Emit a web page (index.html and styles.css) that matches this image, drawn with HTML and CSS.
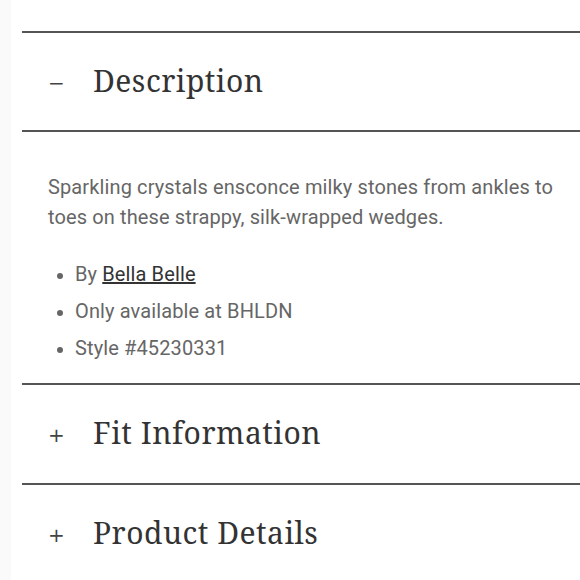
FILE: index.html
```html
<!DOCTYPE html>
<html>
<head>
<meta charset="utf-8">
<link rel="stylesheet" href="styles.css">
</head>
<body>
<div class="page">
  <div class="accordion">
    <section class="item open">
      <div class="head"><span class="sign">&minus;</span><h2>Description</h2></div>
      <div class="body">
        <p>Sparkling crystals ensconce milky stones from ankles to toes on these strappy, silk-wrapped wedges.</p>
        <ul>
          <li>By <a href="#">Bella Belle</a></li>
          <li>Only available at BHLDN</li>
          <li>Style #45230331</li>
        </ul>
      </div>
    </section>
    <section class="item">
      <div class="head"><span class="sign">+</span><h2>Fit Information</h2></div>
    </section>
    <section class="item">
      <div class="head"><span class="sign">+</span><h2>Product Details</h2></div>
    </section>
  </div>
</div>
</body>
</html>
```
FILE: styles.css
```css
html, body { margin: 0; padding: 0; background: #fafafa; }
.page {
  margin-left: 11px;
  background: #fff;
  padding: 31px 0 0 11px;
  min-height: 580px;
  box-sizing: border-box;
}
.item { border-top: 2px solid #555; }
.head {
  display: flex;
  align-items: center;
  height: 98px;
  padding-left: 26px;
  box-sizing: border-box;
}
.item.open .head { height: 99px; border-bottom: 2px solid #555; }
.sign {
  width: 45px;
  padding-top: 2px;
  font-family: "DejaVu Sans", sans-serif;
  font-size: 20px;
  color: #444;
}
h2 {
  margin: 0;
  padding-bottom: 3px;
  font-family: "Noto Serif", "DejaVu Serif", serif;
  font-weight: 400;
  font-size: 30px;
  letter-spacing: 0.5px;
  color: #333;
}
.body {
  padding: 40px 20px 16px 26px;
  font-family: Roboto, sans-serif;
  font-size: 20px;
  letter-spacing: 0.12px;
  color: #666;
}
.body p { margin: 0 0 24px; line-height: 30px; }
.body ul { margin: 0; padding-left: 27px; }
.body li { line-height: 37px; }
.body li::marker { font-size: 18px; }
.body a { color: #333; text-decoration: underline; }
```
